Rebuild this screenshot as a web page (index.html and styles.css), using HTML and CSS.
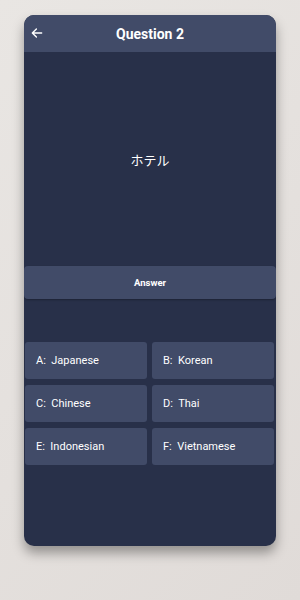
FILE: index.html
```html
<!DOCTYPE html>
<html lang="en">
<head>
    <meta charset="UTF-8">
    <meta name="viewport" content="width=device-width, initial-scale=1.0">
    <title>Question 2</title>
    <link rel="stylesheet" href="styles.css">
</head>
<body>
    <div class="phone">
        <div class="header">
            <span class="back">
                <svg width="14" height="14" viewBox="0 0 24 24"><path d="M20 12H5M11 5l-7 7 7 7" fill="none" stroke="#fff" stroke-width="2.4" stroke-linecap="round" stroke-linejoin="round"/></svg>
            </span>
            <h1>Question 2</h1>
        </div>
        <div class="question">ホテル</div>
        <div class="answer">Answer</div>
        <div class="options">
            <div class="option">A:&nbsp; Japanese</div>
            <div class="option">B:&nbsp; Korean</div>
            <div class="option">C:&nbsp; Chinese</div>
            <div class="option">D:&nbsp; Thai</div>
            <div class="option">E:&nbsp; Indonesian</div>
            <div class="option">F:&nbsp; Vietnamese</div>
        </div>
    </div>
</body>
</html>
```

FILE: styles.css
```css
body {
    margin: 0;
    padding: 15px 24px 0;
    height: 600px;
    box-sizing: border-box;
    background: linear-gradient(135deg, #e9e6e3, #e0dbd8);
    font-family: Roboto, 'Noto Sans CJK JP', sans-serif;
    color: #fff;
}
.phone {
    height: 531px;
    background-color: #283049;
    border-radius: 10px;
    overflow: hidden;
    box-shadow: 0 7px 12px rgba(0, 0, 0, 0.35);
}
.header {
    position: relative;
    height: 37px;
    background-color: #414b68;
    display: flex;
    align-items: center;
    justify-content: center;
}
.back {
    position: absolute;
    left: 6px;
    top: 11px;
    display: flex;
}
.header h1 {
    margin: 0;
    font-size: 14px;
    font-weight: 700;
}
.question {
    height: 214px;
    display: flex;
    align-items: center;
    justify-content: center;
    font-size: 13px;
}
.answer {
    height: 33px;
    background-color: #414b68;
    border-radius: 4px;
    display: flex;
    align-items: center;
    justify-content: center;
    font-size: 9.5px;
    font-weight: 700;
    box-shadow: 0 1px 2px rgba(0, 0, 0, 0.3);
}
.options {
    display: grid;
    grid-template-columns: 122px 122px;
    gap: 6px 5px;
    padding: 43px 0 0 1px;
}
.option {
    height: 37px;
    background-color: #414b68;
    border-radius: 3px;
    display: flex;
    align-items: center;
    padding-left: 11px;
    font-size: 11px;
}
```
